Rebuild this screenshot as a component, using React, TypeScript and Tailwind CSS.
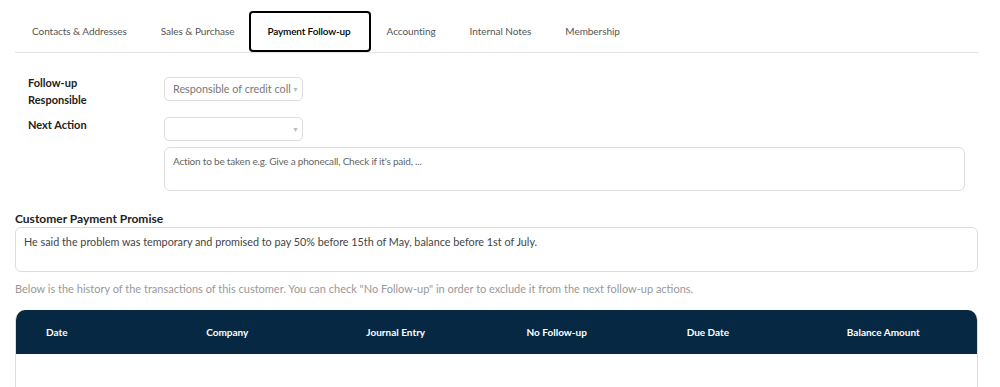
const tabs = [
  "Contacts & Addresses",
  "Sales & Purchase",
  "Payment Follow-up",
  "Accounting",
  "Internal Notes",
  "Membership",
];

const columns = [
  "Date",
  "Company",
  "Journal Entry",
  "No Follow-up",
  "Due Date",
  "Balance Amount",
];

function Caret() {
  return (
    <span className="ml-auto shrink-0 text-[#bbb] text-[7px] leading-none">▼</span>
  );
}

export default function App() {
  return (
    <div className="bg-white w-[1000px] h-[387px] overflow-hidden font-['Lato',sans-serif] text-[#222]">
      <div className="px-[15px] pr-[22px]">
        {/* Tabs */}
        <div className="flex pt-[11px] border-b border-[#e3e3e3]">
          {tabs.map((t) => {
            const active = t === "Payment Follow-up";
            return (
              <div
                key={t}
                className={
                  active
                    ? "h-[41px] pl-[16px] pr-[18px] -ml-[2px] mr-[-1px] flex items-center border-2 border-black rounded-[4px] text-[10px] font-semibold tracking-[-0.15px] text-black -mb-px"
                    : "h-[41px] px-[17px] flex items-center text-[10px] tracking-[-0.05px] text-[#555]"
                }
              >
                {t}
              </div>
            );
          })}
        </div>

        {/* Form */}
        <div className="pl-[13px] pt-[24px]">
          <div className="flex">
            <div className="w-[136px] -mt-[3px] mb-[3px] text-[11px] font-bold leading-[17px]">
              Follow-up
              <br />
              Responsible
            </div>
            <div className="w-[139px] h-[24px] border border-[#ddd] rounded-[5px] flex items-center pl-[8px] pr-[3px] text-[10.8px] text-[#777]">
              <span className="whitespace-nowrap overflow-hidden">Responsible of credit coll</span>
              <Caret />
            </div>
          </div>
          <div className="flex mt-[6px]">
            <div className="w-[136px] -mt-[1px] text-[11px] font-bold leading-[17px]">Next Action</div>
            <div className="w-[139px] h-[24px] border border-[#ddd] rounded-[5px] flex items-center pl-[8px] pr-[3px]">
              <Caret />
            </div>
          </div>
          <div className="ml-[136px] mt-[6px] w-[801px] h-[44px] border border-[#ddd] rounded-[6px] px-[8px] pt-[6px] text-[10px] text-[#666] tracking-[-0.2px]">
            Action to be taken e.g. Give a phonecall, Check if it's paid, ...
          </div>
        </div>

        {/* Promise */}
        <div className="mt-[21px] text-[12px] font-bold leading-[14px]">Customer Payment Promise</div>
        <div className="mt-[1px] h-[45px] border border-[#ddd] rounded-[6px] px-[8px] pt-[6px] text-[10.8px] text-[#444]">
          He said the problem was temporary and promised to pay 50% before 15th of May, balance before 1st of July.
        </div>
        <div className="mt-[10px] text-[11px] text-[#999] leading-[14px]">
          Below is the history of the transactions of this customer. You can check "No Follow-up" in order to exclude it from the next follow-up actions.
        </div>

        {/* Table */}
        <div className="mt-[14px] border-x border-[#ddd] rounded-t-[10px] overflow-hidden h-[100px]">
          <div className="bg-[#072842] h-[44px] grid grid-cols-6 items-center">
            {columns.map((c) => (
              <div key={c} className="pl-[30px] text-[10px] font-bold text-white">
                {c}
              </div>
            ))}
          </div>
        </div>
      </div>
    </div>
  );
}
